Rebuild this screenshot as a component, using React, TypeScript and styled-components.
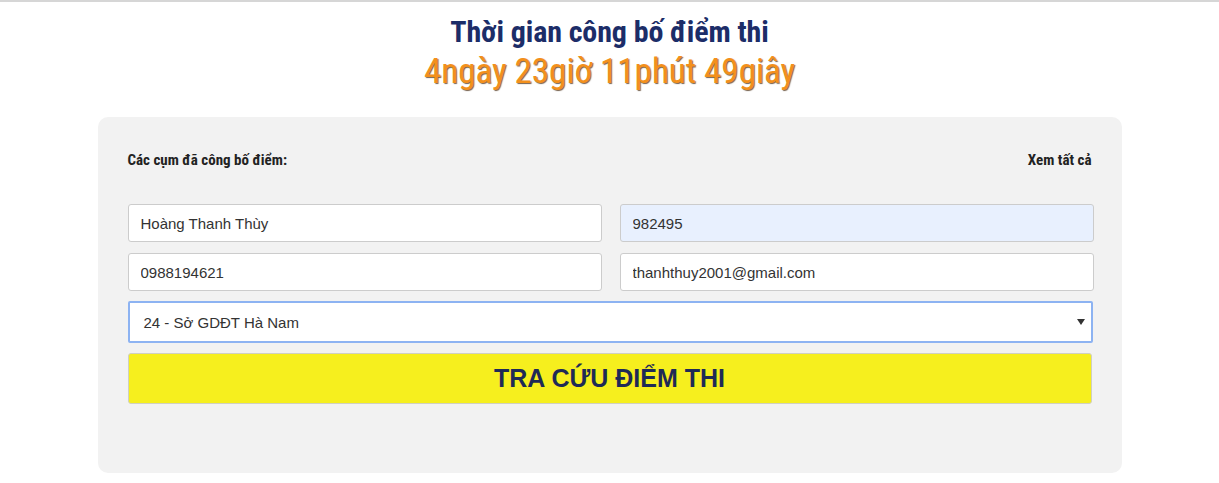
import React from 'react'
import styled, {createGlobalStyle} from 'styled-components'

const GlobalStyle = createGlobalStyle`
  html, body {
    margin: 0;
    padding: 0;
    background: #fff;
  }
  body {
    border-top: 2px solid #d6d6d6;
    font-family: "Liberation Sans", Arial, sans-serif;
  }
`

const Page = styled.div`
  display: flex;
  flex-direction: column;
  align-items: center;
`

const Header = styled.div`
  display: flex;
  flex-direction: column;
  align-items: center;
  padding-top: 12px;
  font-family: Roboto, "Noto Sans", sans-serif;
  font-stretch: condensed;
`

const Title = styled.h1`
  margin: 0;
  font-size: 30px;
  line-height: 36px;
  font-weight: 700;
  color: #1c2d68;
  letter-spacing: -0.1px;
`

const Countdown = styled.div`
  font-size: 35px;
  line-height: 44px;
  font-weight: 400;
  color: #f3901c;
  text-shadow: 1px 1px 1px rgba(60, 30, 0, 0.7);
`

const Panel = styled.div`
  width: 1024px;
  box-sizing: border-box;
  margin-top: 23px;
  padding: 30px 30px 69px;
  background: #f2f2f2;
  border-radius: 10px;
`

const TopRow = styled.div`
  display: flex;
  justify-content: space-between;
  align-items: center;
  height: 26px;
  margin-bottom: 31px;
`

const SmallBold = styled.span`
  font-family: Roboto, "Noto Sans", sans-serif;
  font-stretch: condensed;
  font-weight: 700;
  font-size: 15px;
  color: #222;
`

const Form = styled.div`
  display: flex;
  flex-direction: column;
  gap: 10px;
`

const Row = styled.div`
  display: grid;
  grid-template-columns: 1fr 1fr;
  column-gap: 18px;
  margin-right: -2px;
  &:first-child {
    margin-bottom: 1px;
  }
`

const Input = styled.input<{$filled?: boolean}>`
  height: 38px;
  box-sizing: border-box;
  padding: 0 12px;
  border: 1px solid #cccccc;
  border-radius: 3px;
  background: ${p => (p.$filled ? '#e8f0fe' : '#fff')};
  font-family: "Liberation Sans", Arial, sans-serif;
  font-size: 15px;
  color: #333;
  outline: none;
`

const SelectBox = styled.div`
  height: 42px;
  box-sizing: border-box;
  margin-right: -1px;
  border: 2px solid #8db3f2;
  border-radius: 2px;
  background: #fff;
  display: flex;
  align-items: center;
  padding: 0 14px;
  font-size: 15px;
  color: #333;
`

const Caret = styled.span`
  margin-left: auto;
  width: 0;
  height: 0;
  border-left: 4px solid transparent;
  border-right: 4px solid transparent;
  border-top: 6px solid #333;
  margin-right: -8px;
`

const SearchButton = styled.button`
  height: 51px;
  border: 1px solid #d0d0c0;
  border-radius: 3px;
  background: #f6ef1e;
  font-family: "Liberation Sans", Arial, sans-serif;
  font-weight: 700;
  font-size: 25px;
  color: #1f2a56;
  cursor: pointer;
`

export default function App() {
  return (
    <Page>
      <GlobalStyle />
      <Header>
        <Title>Thời gian công bố điểm thi</Title>
        <Countdown>4ngày 23giờ 11phút 49giây</Countdown>
      </Header>
      <Panel>
        <TopRow>
          <SmallBold>Các cụm đã công bố điểm:</SmallBold>
          <SmallBold>Xem tất cả</SmallBold>
        </TopRow>
        <Form>
          <Row>
            <Input defaultValue="Hoàng Thanh Thùy" />
            <Input $filled defaultValue="982495" />
          </Row>
          <Row>
            <Input defaultValue="0988194621" />
            <Input defaultValue="thanhthuy2001@gmail.com" />
          </Row>
          <SelectBox>
            24 - Sở GDĐT Hà Nam
            <Caret />
          </SelectBox>
          <SearchButton>TRA CỨU ĐIỂM THI</SearchButton>
        </Form>
      </Panel>
    </Page>
  )
}
